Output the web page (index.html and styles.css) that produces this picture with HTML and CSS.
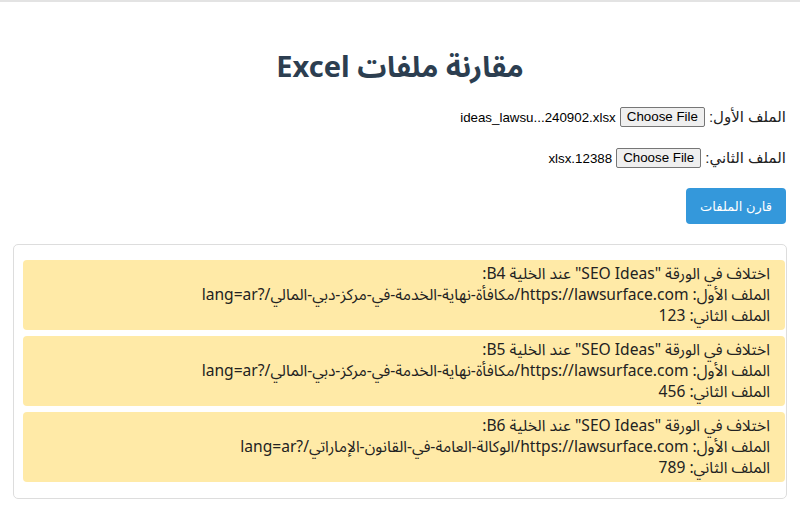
FILE: index.html
```html
<!DOCTYPE html>
<html lang="ar" dir="rtl">
<head>
<meta charset="utf-8">
<title>مقارنة ملفات Excel</title>
<link rel="stylesheet" href="styles.css">
</head>
<body>
<div class="page">
  <h1 class="title">مقارنة ملفات Excel</h1>
  <div class="field field-first">
    <label class="field-label">الملف الأول:</label>
    <span class="file-input"><span class="file-btn">Choose File</span><span class="file-name">ideas_lawsu...240902.xlsx</span></span>
  </div>
  <div class="field field-second">
    <label class="field-label">الملف الثاني:</label>
    <span class="file-input"><span class="file-btn">Choose File</span><span class="file-name">12388.xlsx</span></span>
  </div>
  <button class="compare-btn">قارن الملفات</button>
  <div class="results">
    <div class="diff">
      <div>اختلاف في الورقة "SEO Ideas" عند الخلية B4:</div>
      <div>الملف الأول: https://lawsurface.com/مكافأة-نهاية-الخدمة-في-مركز-دبي-المالي/?lang=ar</div>
      <div>الملف الثاني: 123</div>
    </div>
    <div class="diff">
      <div>اختلاف في الورقة "SEO Ideas" عند الخلية B5:</div>
      <div>الملف الأول: https://lawsurface.com/مكافأة-نهاية-الخدمة-في-مركز-دبي-المالي/?lang=ar</div>
      <div>الملف الثاني: 456</div>
    </div>
    <div class="diff">
      <div>اختلاف في الورقة "SEO Ideas" عند الخلية B6:</div>
      <div>الملف الأول: https://lawsurface.com/الوكالة-العامة-في-القانون-الإماراتي/?lang=ar</div>
      <div>الملف الثاني: 789</div>
    </div>
  </div>
</div>
</body>
</html>
```

FILE: styles.css
```css
html, body {
  margin: 0;
  padding: 0;
  background: #ffffff;
}
body {
  border-top: 2px solid #e3e3e3;
  direction: rtl;
  font-family: "Noto Sans", "Noto Sans Arabic", "DejaVu Sans", sans-serif;
  color: #222222;
}
.page {
  padding: 0 13px 0 13px;
  display: flex;
  flex-direction: column;
  align-items: stretch;
}
.title {
  margin: 47px 0 0;
  font-size: 29px;
  line-height: 34px;
  font-weight: 700;
  color: #2c3e50;
  text-align: center;
}
.field {
  display: flex;
  align-items: center;
  gap: 4px;
  height: 22px;
  padding-right: 1px;
  font-family: "Liberation Sans", "DejaVu Sans", sans-serif;
  font-size: 15px;
  color: #222222;
}
.field-first { margin-top: 23px; }
.field-second { margin-top: 19px; }
.file-input {
  display: flex;
  align-items: center;
  gap: 4px;
  font-size: 13.33px;
}
.file-btn {
  display: inline-block;
  direction: ltr;
  background: #efefef;
  border: 1px solid #767676;
  border-radius: 2px;
  padding: 1px 6px;
  line-height: 16px;
  color: #000000;
  font-family: "Liberation Sans", Arial, sans-serif;
}
.file-name {
  font-family: "Liberation Sans", Arial, sans-serif;
  color: #000000;
}
.compare-btn {
  align-self: flex-start;
  margin: 19px 1px 0 0;
  width: 100px;
  height: 36px;
  border: none;
  border-radius: 4px;
  background: #3498db;
  color: #ffffff;
  font-family: "Liberation Sans", "DejaVu Sans", sans-serif;
  font-size: 13px;
  padding: 0;
}
.results {
  margin-top: 20px;
  border: 1px solid #dddddd;
  border-radius: 5px;
  padding: 15px 1px 16px 9px;
  display: flex;
  flex-direction: column;
  gap: 6px;
}
.diff {
  background: #ffeaa7;
  border-radius: 4px;
  padding: 3px 15px 4px 10px;
  font-size: 15.6px;
  line-height: 21px;
  color: #222222;
}
```
